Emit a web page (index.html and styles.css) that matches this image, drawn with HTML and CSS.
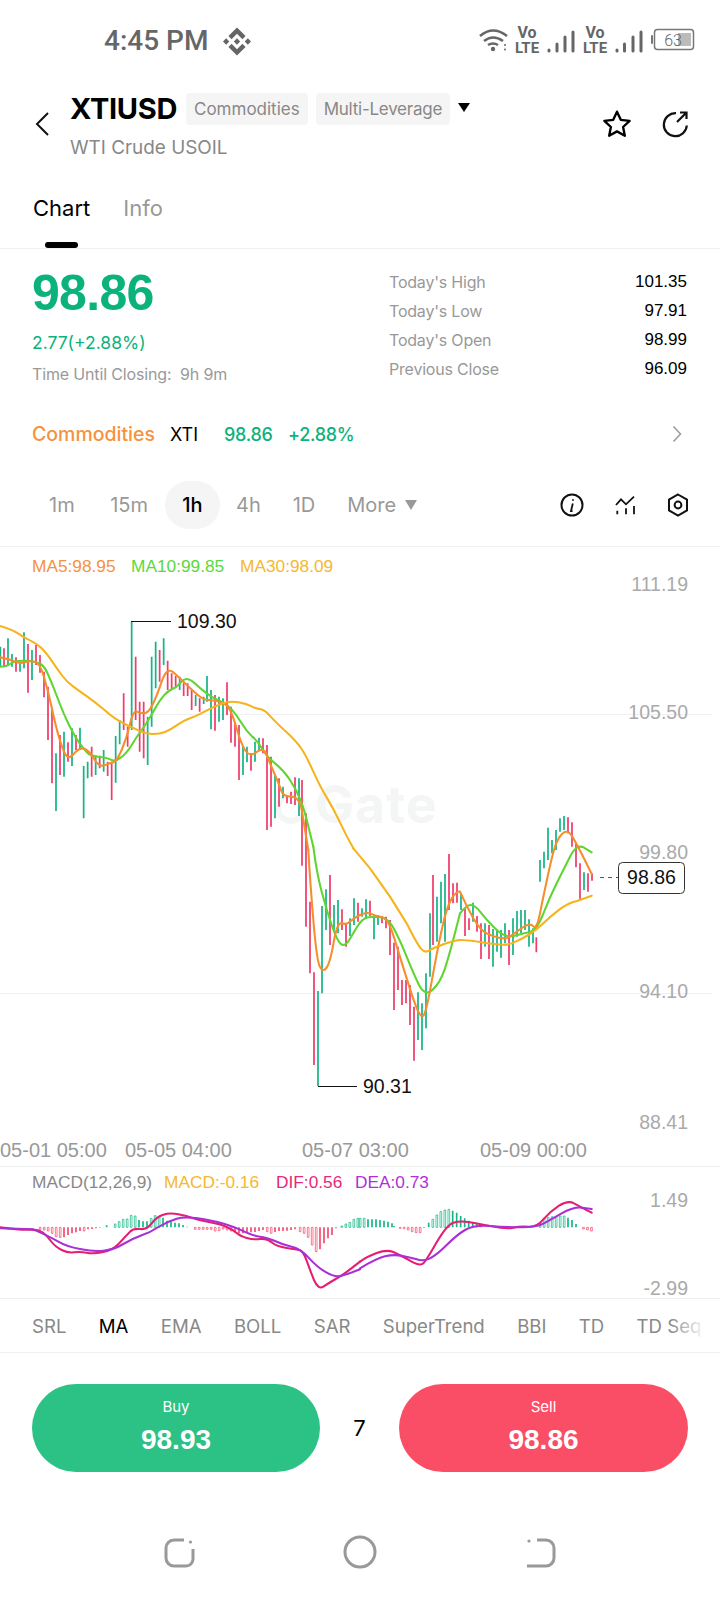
FILE: index.html
```html
<!DOCTYPE html>
<html lang="en">
<head>
<meta charset="utf-8">
<title>XTIUSD</title>
<link rel="stylesheet" href="styles.css">
</head>
<body>
<div class="page">
  <div class="status">
    <span class="clock">4:45 PM</span>
    <svg class="binance" viewBox="0 0 32 32"><path d="M9.8 13.4 16 7.2l6.2 6.2 3.6-3.6L16 0 6.2 9.8zM0 16l3.6-3.6L7.2 16l-3.6 3.6zM9.8 18.6 16 24.8l6.2-6.2 3.6 3.6L16 32l-9.8-9.8zM24.8 16l3.6-3.6L32 16l-3.6 3.6zM19.6 16 16 12.4 12.4 16l3.6 3.6z"/></svg>
    <svg class="sysicons" viewBox="470 22 230 36">
      <g class="wifi"><path d="M480 36q13-11 27 0M484 41q9-7 19 0M488 45q5-3 10 0"/></g>
      <circle class="sysfill" cx="493" cy="49" r="2.2"/><circle class="sysfill" cx="505" cy="45" r="1"/><circle class="sysfill" cx="505" cy="49.500" r="1"/>
      <text class="vo" x="527" y="38" text-anchor="middle">Vo</text><text class="lte" x="527" y="53" text-anchor="middle">LTE</text>
      <path class="bars" d="M549 50v1M557 44v7M565 37v14M573 32v19"/>
      <text class="vo" x="595" y="38" text-anchor="middle">Vo</text><text class="lte" x="595" y="53" text-anchor="middle">LTE</text>
      <path class="bars" d="M617 50v1M624.500 44v7M633 37v14M641 32v19"/>
      <rect class="batt-nub" x="651" y="35" width="2" height="9" rx="1"/>
      <rect class="batt" x="654.500" y="29.500" width="39" height="20" rx="3"/>
      <rect class="batt-fill" x="678" y="33" width="13" height="13"/>
      <text class="batt-text" x="673" y="45.500" text-anchor="middle">63</text>
    </svg>
  </div>

  <header class="head">
    <svg class="back" viewBox="0 0 16 26"><path d="M14 2 3 13l11 11"/></svg>
    <div class="title">
      <div class="title-row">
        <h1 class="symbol">XTIUSD</h1>
        <span class="chip chip-a">Commodities</span>
        <span class="chip">Multi-Leverage</span>
        <span class="caret"></span>
      </div>
      <div class="subtitle">WTI Crude USOIL</div>
    </div>
    <svg class="star" viewBox="0 0 28 28"><path d="m14 2.500 3.500 7.600 8.300 1-6.100 5.700 1.600 8.200L14 20.900 6.700 25l1.600-8.200-6.100-5.700 8.300-1z"/></svg>
    <svg class="share" viewBox="0 0 28 28"><path d="M15 3.200A11.500 11.500 0 1 0 25.800 15.500M19 2.500h6.500V9M25.500 2.500 16 12"/></svg>
  </header>

  <nav class="tabs">
    <span class="tab tab-on">Chart</span>
    <span class="tab">Info</span>
  </nav>

  <section class="quote">
    <div class="quote-left">
      <div class="price">98.86</div>
      <div class="change">2.77(+2.88%)</div>
      <div class="closing">Time Until Closing:&nbsp; 9h 9m</div>
    </div>
    <dl class="stats">
      <div class="stat"><dt>Today's High</dt><dd>101.35</dd></div>
      <div class="stat"><dt>Today's Low</dt><dd>97.91</dd></div>
      <div class="stat"><dt>Today's Open</dt><dd>98.99</dd></div>
      <div class="stat"><dt>Previous Close</dt><dd>96.09</dd></div>
    </dl>
  </section>

  <div class="market">
    <span class="m-cat">Commodities</span>
    <span class="m-sym">XTI</span>
    <span class="m-num m-price">98.86</span>
    <span class="m-num">+2.88%</span>
    <svg class="m-arrow" viewBox="0 0 10 18"><path d="m1.500 1.500 7 7.500-7 7.500"/></svg>
  </div>

  <div class="periods">
    <span class="period p1">1m</span>
    <span class="period p2">15m</span>
    <span class="period period-on">1h</span>
    <span class="period p4">4h</span>
    <span class="period p5">1D</span>
    <span class="period p6">More</span>
    <span class="more-caret"></span>
    <svg class="tool tool-i" viewBox="0 0 24 24"><circle cx="12" cy="12" r="10.500"/><path class="thin" d="M12.800 10.500 11 18h1.500M13 6.200v1.600"/></svg>
    <svg class="tool tool-c" viewBox="0 0 24 24"><path d="m2 12 5-5.700 5 5 8-7.600"/><path d="M3.300 17.700v3.600M12 15.300v6M20 13v8.300"/></svg>
    <svg class="tool tool-h" viewBox="0 0 24 24"><path d="M12 1.500 21 6.700v10.600l-9 5.200-9-5.200V6.700z"/><circle cx="12" cy="12" r="3.400"/></svg>
  </div>

  <svg class="chart" viewBox="0 547 720 619">
    <path class="grid" d="M0 714.500H712M0 993.500H712"/>
    <text class="mark-g" x="315" y="823">Gate</text>
    <circle class="mark-c" cx="291" cy="808" r="13"/>
    <text class="lg lg-5" x="32" y="572">MA5:98.95</text>
    <text class="lg lg-10" x="131" y="572">MA10:99.85</text>
    <text class="lg lg-30" x="240" y="572">MA30:98.09</text>

    <g transform="translate(0 550) scale(.33333)">
      <path class="up" d="M1 290V350M24 265V345M36 312V350M60 335V365M72 247V355M96 300V390M168 610V783M192 545V680M216 535V648M240 533V600M251 648V805M263 635V685M287 617V675M311 600V665M347 558V698M359 510V583M395 215V540M443 500V645M455 320V530M467 275V415M491 265V345M539 380V420M587 435V468M611 440V462M621 378V455M633 420V538M657 440V515M669 445V510M729 590V675M741 590V637M765 575V635M777 563V600M825 678V805M849 710V745M897 685V798"/>
      <path class="down" d="M12 295V350M48 322V365M84 282V428M108 285V345M120 315V368M132 365V442M144 410V570M156 475V700M180 555V675M204 577V635M228 555V600M275 590V680M299 617V655M323 635V678M335 635V750M371 430V540M383 530V590M407 320V510M419 455V605M431 455V625M479 300V395M503 332V420M515 370V420M527 378V415M551 400V438M563 400V438M575 420V480M599 445V485M645 435V542M681 397V495M693 470V578M705 520V590M717 525V690M753 610V662M789 565V610M801 585V840M813 620V830M837 685V770M861 735V760M873 725V762M885 682V765"/>
    </g>
    <g transform="translate(260 780) scale(.33333)">
      <path class="up" d="M174 633V918M186 378V640M198 328V450M222 375V450M234 360V460M270 415V468M282 355V435M306 385V410M318 358V415M342 405V478M354 405V435M474 637V780M486 670V810M498 580V745M510 400V590"/>
      <path class="down" d="M126 0V257M138 100V440M150 365V580M162 577V855M210 285V495M246 388V450M258 430V500M294 368V425M330 362V408M366 408V430M378 410V445M390 420V525M402 488V690M414 500V630M426 600V675M438 600V670M450 615V735M462 680V842"/>
    </g>
    <g transform="translate(360 780) scale(.33333)">
      <path class="up" d="M231 350V485M243 305V430M255 282V485M303 340V390M339 368V425M375 430V500M399 447V560M411 450V515M423 450V533M435 430V490M459 415V525M471 393V470M483 390V460M495 390V450M507 418V500M519 445V490M540 240V305M552 215V265M564 143V240M576 180V220M588 150V210M600 115V155M612 108V150M672 277V330"/>
      <path class="down" d="M219 285V495M267 222V390M279 310V370M291 308V368M315 385V468M327 415V450M351 408V455M363 430V537M387 435V537M447 450V555M529 472V517M624 112V160M636 127V200M648 190V262M660 250V360M684 280V335M696 280V302"/>
    </g>

    <g transform="translate(0 550) scale(.33333)">
      <path class="ma ma10" d="M0,350 Q20,350 30,342 40,335 55,333 70,332 90,333 110,335 122,342 135,350 147,380 160,410 175,450 190,490 207,525 225,560 237,577 250,595 260,606 270,618 295,620 320,622 332,629 345,637 362,623 380,610 395,585 410,560 425,540 440,520 450,502 460,485 470,467 480,450 492,436 505,422 517,417 530,412 545,395 560,378 580,396 600,415 620,430 640,445 660,453 680,462 695,478 710,495 725,520 740,545 757,560 775,575 787,597 800,620 825,640 850,660 870,690 890,720 902,752 915,785 927,837 L940,890"/>
      <path class="ma ma5" d="M0,322 Q30,328 45,335 60,342 75,337 90,332 105,335 120,338 132,381 145,425 155,472 165,520 175,555 185,590 195,611 205,632 222,611 240,590 255,597 270,605 283,628 297,652 313,646 330,640 340,637 350,635 365,600 380,565 390,522 400,480 410,485 420,490 432,490 445,490 457,465 470,440 485,395 500,350 520,367 540,385 555,400 570,415 590,432 610,450 625,450 640,450 660,455 680,460 690,480 700,500 712,542 725,585 737,603 750,622 770,606 790,590 800,615 810,640 825,675 840,710 845,725 850,740 875,740 900,740 907,790 915,840 925,900"/>
      <path class="ma ma30" d="M0,228 Q40,240 55,251 70,262 90,271 110,280 125,295 140,310 155,332 170,355 185,375 200,395 220,410 240,425 265,442 290,460 310,477 330,495 345,505 360,515 375,522 390,530 415,541 440,552 460,552 480,552 495,546 510,540 530,526 550,512 570,505 590,498 615,484 640,470 665,461 690,452 715,457 740,462 755,469 770,477 782,478 795,480 812,500 830,520 860,547 890,575 905,597 920,620 940,665 960,710 980,742 1000,775 1020,817 1040,860 1060,895"/>
    </g>
    <g transform="translate(260 780) scale(.33333)">
      <path class="ma ma10" d="M160,200 Q170,280 185,335 200,390 215,435 230,480 242,491 255,503 270,476 285,450 297,432 310,415 325,412 340,410 362,412 385,415 402,447 420,480 440,530 460,580 477,615 495,650 517,630 540,610 555,565 570,520 600,400"/>
      <path class="ma ma5" d="M145,210 Q150,300 160,420 170,540 179,559 188,578 199,564 210,550 221,487 232,425 245,430 258,435 269,425 280,415 300,405 320,395 332,401 345,408 365,411 385,415 402,472 420,530 440,595 460,660 472,689 485,718 492,704 500,690 515,605 530,520 545,450 560,380 575,356 590,332 600,335"/>
      <path class="ma ma30" d="M280,205 L330,265 L390,350 L440,430 Q470,490 482,505 495,520 507,512 520,505 550,493 580,482 600,480"/>
    </g>
    <g transform="translate(360 780) scale(.33333)">
      <path class="ma ma10" d="M300,400 Q320,375 332,375 345,375 362,397 380,420 400,440 420,460 435,466 450,472 470,466 490,460 510,456 530,452 550,401 570,350 590,310 610,270 630,230 650,190 672,203 L695,217"/>
      <path class="ma ma5" d="M300,335 Q320,380 340,415 360,450 380,460 400,470 420,474 440,478 455,466 470,455 490,441 510,428 520,439 530,450 540,400 550,350 565,280 580,210 590,187 600,165 612,157 625,150 637,170 650,190 695,282"/>
      <path class="ma ma30" d="M300,480 Q340,482 360,486 380,490 410,493 440,497 460,488 480,480 505,465 530,450 550,430 570,410 595,391 620,372 640,366 660,360 695,347"/>
    </g>

    <path class="leader" d="M131 621.500H171M318 1086.500H357"/>
    <text class="ext" x="177" y="628">109.30</text>
    <text class="ext" x="363" y="1093">90.31</text>

    <path class="dash" d="M600 877.500H618"/>
    <rect class="tag" x="618.500" y="862.500" width="66" height="31" rx="4"/>
    <text class="ext" x="651.500" y="884" text-anchor="middle">98.86</text>

    <text class="axis" x="688" y="591" text-anchor="end">111.19</text>
    <text class="axis" x="688" y="719" text-anchor="end">105.50</text>
    <text class="axis" x="688" y="859" text-anchor="end">99.80</text>
    <text class="axis" x="688" y="998" text-anchor="end">94.10</text>
    <text class="axis" x="688" y="1129" text-anchor="end">88.41</text>
    <text class="date" x="0" y="1157">05-01 05:00</text>
    <text class="date" x="125" y="1157">05-05 04:00</text>
    <text class="date" x="302" y="1157">05-07 03:00</text>
    <text class="date" x="480" y="1157">05-09 00:00</text>
  </svg>

  <svg class="macd" viewBox="0 1167 720 131">
    <text class="lg lg-m" x="32" y="1188">MACD(12,26,9)</text>
    <text class="lg lg-30" x="164" y="1188">MACD:-0.16</text>
    <text class="lg lg-d" x="276" y="1188">DIF:0.56</text>
    <text class="lg lg-e" x="355" y="1188">DEA:0.73</text>
    <g transform="translate(0 1150) scale(.33333)">
      <path class="h-g" d="M320 232V226M417 232V210M429 232V214M441 232V214M489 232V203M501 232V212M513 232V215M525 232V218M537 232V220M549 232V225M561 232V230"/>
      <path class="h-go" d="M343 232V222h5V232zM355 232V215h5V232zM367 232V208h5V232zM379 232V207h5V232zM391 232V196h5V232zM403 232V198h5V232zM451 232V205h5V232zM463 232V197h5V232zM475 232V200h5V232zM1023 232V228h5V232zM1035 232V222h5V232zM1047 232V217h5V232zM1059 232V208h5V232zM1071 232V205h5V232z"/>
      <path class="h-r" d="M192 232V262M204 232V255M216 232V250M228 232V247M240 232V243M264 232V238M276 232V237M288 232V235M300 232V233M705 232V245M717 232V250M729 232V250M741 232V248M753 232V247M765 232V246M777 232V243M789 232V240M825 232V246M837 232V243M849 232V243M861 232V242M873 232V240M885 232V238M960 232V298M972 232V280M984 232V265M996 232V255M1008 232V235"/>
      <path class="h-ro" d="M118 232V238h5V232zM130 232V240h5V232zM142 232V243h5V232zM154 232V250h5V232zM166 232V260h5V232zM178 232V262h5V232zM250 232V243h5V232zM583 232V238h5V232zM595 232V238h5V232zM607 232V238h5V232zM619 232V238h5V232zM631 232V238h5V232zM643 232V243h5V232zM655 232V242h5V232zM667 232V237h5V232zM679 232V240h5V232zM691 232V243h5V232zM799 232V245h5V232zM811 232V250h5V232zM898 232V245h5V232zM910 232V250h5V232zM922 232V262h5V232zM934 232V285h5V232zM946 232V305h5V232z"/>
      <path class="ma dif" d="M0,232 Q60,240 85,239 110,238 122,244 135,250 150,270 165,290 185,300 205,310 222,307 240,305 260,308 280,312 310,306 340,300 360,277 380,255 390,245 400,235 420,237 440,240 455,220 470,200 490,194 510,188 535,193 560,198 580,205 600,212 630,217 660,222 680,231 700,240 710,249 720,258 740,264 760,270 780,267 800,265 815,277 830,290 860,294 890,298 900,301 910,305 920,332 930,360 942,390 955,420 970,410 985,400 1007,387 1030,375 1080,335"/>
      <path class="ma dea" d="M0,235 L100,238 Q150,260 175,275 200,290 240,297 280,305 310,302 340,300 370,282 400,265 425,256 450,248 475,231 500,215 530,206 560,198 620,209 680,220 720,239 760,258 780,260 800,262 825,273 850,285 875,290 900,295 925,322 950,350 975,365 1000,380 1015,379 1030,378 1080,358"/>
    </g>
    <g transform="translate(360 1150) scale(.33333)">
      <path class="h-g" d="M24 232V208M36 232V208M48 232V208M60 232V210M72 232V212M84 232V215M96 232V220M102 232V228M206 232V218M278 232V182M290 232V188M302 232V198M314 232V205M326 232V212M338 232V218M350 232V222M362 232V226M624 232V203M636 232V210M648 232V222"/>
      <path class="h-go" d="M-2 232V205h5V232zM10 232V205h5V232zM216 232V208h5V232zM228 232V195h5V232zM240 232V185h5V232zM252 232V180h5V232zM264 232V178h5V232zM538 232V220h5V232zM550 232V205h5V232zM562 232V202h5V232zM574 232V200h5V232zM586 232V200h5V232zM598 232V198h5V232zM610 232V198h5V232z"/>
      <path class="h-r" d="M192 232V234"/>
      <path class="h-ro" d="M118 232V235h5V232zM130 232V236h5V232zM142 232V240h5V232zM154 232V245h5V232zM166 232V248h5V232zM178 232V248h5V232zM668 232V237h5V232zM680 232V240h5V232zM692 232V243h5V232z"/>
      <path class="ma dif" d="M0,335 Q20,320 50,309 80,298 100,306 120,315 150,332 180,350 190,340 200,330 230,277 260,225 280,218 300,212 325,216 350,220 395,229 440,238 460,233 480,228 505,230 530,232 550,208 570,185 597,167 625,150 642,160 660,170 695,188"/>
      <path class="ma dea" d="M0,355 Q50,325 75,319 100,313 125,317 150,322 170,328 190,335 210,325 230,315 260,285 290,255 315,240 340,225 390,228 440,232 485,232 530,232 550,221 570,210 605,190 640,170 667,173 L695,177"/>
    </g>
    <text class="axis" x="688" y="1207" text-anchor="end">1.49</text>
    <text class="axis" x="688" y="1295" text-anchor="end">-2.99</text>
  </svg>

  <div class="indicators">
    <span class="ind">SRL</span>
    <span class="ind ind-on">MA</span>
    <span class="ind">EMA</span>
    <span class="ind">BOLL</span>
    <span class="ind">SAR</span>
    <span class="ind">SuperTrend</span>
    <span class="ind">BBI</span>
    <span class="ind">TD</span>
    <span class="ind">TD Seq</span>
  </div>

  <div class="actions">
    <button class="btn btn-buy"><span class="btn-l">Buy</span><span class="btn-n">98.93</span></button>
    <span class="spread">7</span>
    <button class="btn btn-sell"><span class="btn-l">Sell</span><span class="btn-n">98.86</span></button>
  </div>

  <div class="navbar">
    <svg class="nav nav-l" viewBox="0 0 32 30"><path d="M20 2H10a8 8 0 0 0-8 8v10a8 8 0 0 0 8 8h12a7 7 0 0 0 7-7V11"/><circle cx="26.500" cy="4" r="1.600"/></svg>
    <svg class="nav nav-c" viewBox="0 0 34 34"><circle class="ring" cx="17" cy="17" r="15"/></svg>
    <svg class="nav nav-r" viewBox="0 0 30 30"><path d="M11 2h9a8 8 0 0 1 8 8v10a8 8 0 0 1-8 8H1"/><circle cx="3" cy="3" r="1.600"/></svg>
  </div>
</div>
</body>
</html>
```
FILE: styles.css
```css
* { box-sizing: border-box; margin: 0; padding: 0; }
html, body { background: #fff; }
body { font-family: "Inter", "Liberation Sans", sans-serif; color: #000; }
.page { width: 720px; height: 1600px; overflow: hidden; background: #fff; }

.status { height: 82px; display: flex; align-items: flex-start; padding: 24px 26px 0 104px; }
.clock { font-family: "Roboto", sans-serif; font-size: 28px; font-weight: 500; line-height: 34px; color: #666; width: 119px; }
.binance { width: 28px; height: 29px; margin-top: 3px; fill: #666; }
.sysicons { width: 230px; height: 36px; margin-left: auto; margin-right: -6px; margin-top: -2px; }
.wifi path { fill: none; stroke: #666; stroke-width: 2.600; }
.sysfill { fill: #666; }
.vo, .lte { font-family: "Roboto", sans-serif; font-weight: 700; fill: #666; }
.vo { font-size: 16px; }
.lte { font-size: 15px; }
.bars { fill: none; stroke: #666; stroke-width: 3; stroke-linecap: round; }
.batt-nub { fill: #777; }
.batt { fill: none; stroke: #777; stroke-width: 1.500; }
.batt-fill { fill: #bbb; }
.batt-text { font-family: "Roboto", sans-serif; font-size: 16px; fill: #666; font-weight: 300; }

.head { height: 78px; display: flex; align-items: flex-start; padding-left: 34px; position: relative; }
.back { width: 16px; height: 26px; margin-top: 29px; flex: none; fill: none; stroke: #111; stroke-width: 2; }
.title { margin-left: 20px; width: 502px; }
.title-row { display: flex; align-items: center; height: 44px; margin-top: 5px; }
.symbol { font-size: 29px; font-weight: 700; letter-spacing: -0.3px; line-height: 32px; width: 116px; }
.chip { background: #f5f5f5; border-radius: 4px; font-size: 17px; color: #888; height: 32px; line-height: 32px; padding: 0 8px; margin-right: 8px; white-space: nowrap; }
.chip:not(.chip-a) { letter-spacing: -0.25px; }
.caret { width: 0; height: 0; border-left: 6px solid transparent; border-right: 6px solid transparent; border-top: 9px solid #000; margin-top: -4px; }
.subtitle { font-size: 18.900px; color: #888; line-height: 22px; margin-top: 6px; }
.star { width: 30px; height: 30px; margin-left: 30px; margin-top: 27px; flex: none; fill: none; stroke: #000; stroke-width: 2.200; stroke-linejoin: round; }
.share { width: 28px; height: 28px; margin-left: 29px; margin-top: 28px; flex: none; fill: none; stroke: #111; stroke-width: 2.200; }

.tabs { height: 89px; display: flex; gap: 33px; padding: 32px 0 0 33px; border-bottom: 1px solid #f0f0f0; }
.tab { font-size: 22px; line-height: 32px; color: #999; position: relative; height: 32px; }
.tab-on { color: #000; font-weight: 400; }
.tab-on::after { content: ""; position: absolute; left: 12px; top: 50px; width: 33px; height: 6px; background: #000; border-radius: 3px; }

.quote { height: 167px; display: flex; justify-content: space-between; padding: 18px 33px 0 32px; }
.price { font-family: "Liberation Sans", sans-serif; font-size: 50px; font-weight: 700; letter-spacing: -0.700px; line-height: 52px; color: #0bb27c; }
.change { font-size: 17.500px; line-height: 22px; color: #0bb27c; margin-top: 13px; }
.closing { font-size: 16px; letter-spacing: -0.150px; line-height: 22px; color: #999; margin-top: 9px; }
.stats { width: 298px; }
.stat { display: flex; justify-content: space-between; height: 29px; align-items: center; font-size: 16px; letter-spacing: -0.200px; }
.stat dt { color: #999; }
.stat dd { color: #000; font-family: "Liberation Sans", sans-serif; font-size: 17px; letter-spacing: 0; }

.market { height: 36px; display: flex; align-items: center; padding: 0 38px 0 32px; font-size: 18px; font-weight: 500; }
.m-cat { color: #f7923c; width: 138px; font-size: 19.500px; white-space: nowrap; }
.m-sym { width: 54px; font-weight: 400; }
.m-num { color: #0bb27c; letter-spacing: -0.300px; }
.m-price { width: 64px; }
.m-arrow { width: 10px; height: 18px; margin-left: auto; fill: none; stroke: #999; stroke-width: 1.500; }

.periods { height: 95px; display: flex; align-items: center; border-bottom: 1px solid #f0f0f0; font-size: 20px; color: #999; padding: 11px 0 0 49px; }
.p2 { margin-left: 35.500px; }
.period-on { width: 55px; height: 48px; margin-left: 17px; border-radius: 24px; background: #f5f5f5; color: #000; font-weight: 500; display: flex; align-items: center; justify-content: center; }
.p4 { margin-left: 16px; }
.p5 { margin-left: 32px; }
.p6 { margin-left: 32px; }
.more-caret { width: 0; height: 0; border-left: 6.500px solid transparent; border-right: 6.500px solid transparent; border-top: 10px solid #999; margin-left: 9px; }
.tool { width: 24px; height: 24px; fill: none; stroke: #111; stroke-width: 2; flex: none; }
.tool-i { margin-left: 143px; }
.tool-c { margin-left: 30px; stroke-width: 1.800; }
.tool-h { margin-left: 28px; }
.thin { stroke-width: 1.800; }

.chart { display: block; width: 720px; height: 620px; border-bottom: 1px solid #eee; }
.macd { display: block; width: 720px; height: 132px; border-bottom: 1px solid #eee; }
.chart text, .macd text { font-family: "Liberation Sans", sans-serif; }
.grid { fill: none; stroke: #f0f0f0; stroke-width: 1; }
.chart .mark-g { font-family: "Inter", sans-serif; font-size: 52px; letter-spacing: 1px; font-weight: 700; fill: #f4f5f5; }
.mark-c { fill: none; stroke: #f4f5f5; stroke-width: 6; }
.lg { font-size: 17.300px; }
.lg-5 { fill: #f5923f; }
.lg-10 { fill: #5bd93c; }
.lg-30 { fill: #f5b82e; }
.lg-m { fill: #888; }
.lg-d { fill: #e8287a; }
.lg-e { fill: #b02fd8; }
.up, .down { fill: none; stroke-width: 5.200; }
.up { stroke: #18b488; }
.down { stroke: #ee3e6c; }
.ma { fill: none; stroke-width: 6.200; stroke-linejoin: round; stroke-linecap: round; }
.ma5 { stroke: #f58f2c; }
.ma10 { stroke: #5ed62f; }
.ma30 { stroke: #f6b31c; }
.dif { stroke: #e61e72; }
.dea { stroke: #a92fd6; }
.leader { fill: none; stroke: #111; stroke-width: 1; }
.ext { font-size: 19.500px; fill: #111; }
.dash { fill: none; stroke: #555; stroke-width: 1; stroke-dasharray: 4 4; }
.tag { fill: #fff; stroke: #333; stroke-width: 1; }
.axis { font-size: 19.500px; fill: #aaa; }
.date { font-size: 20px; fill: #999; }
.h-g, .h-r { fill: none; stroke-width: 5; }
.h-go, .h-ro { fill: none; stroke-width: 2.200; }
.h-g, .h-go { stroke: #12b583; }
.h-r, .h-ro { stroke: #f5486f; }

.indicators { height: 54px; display: flex; align-items: center; gap: 32.360px; font-size: 18.600px; color: #888; border-bottom: 1px solid #f0f0f0; padding-left: 32px; overflow: hidden; white-space: nowrap; position: relative; }
.ind-on { color: #000; }
.indicators::after { content: ""; position: absolute; right: 14px; top: 0; bottom: 0; width: 36px; background: linear-gradient(90deg, rgba(255,255,255,0), #fff); }

.actions { height: 152px; display: flex; align-items: flex-start; padding: 31px 32px 0; }
.btn { width: 288px; height: 88px; border: 0; border-radius: 44px; color: #fff; display: flex; flex-direction: column; align-items: center; font-family: "Inter", sans-serif; padding-top: 13px; }
.btn-buy { background: #2cc185; }
.btn-sell { background: #f94e66; width: 289px; }
.btn-l { font-size: 15px; line-height: 20px; }
.btn-n { font-family: "Liberation Sans", sans-serif; font-size: 28px; font-weight: 700; line-height: 32px; margin-top: 7px; }
.spread { width: 79px; text-align: center; font-size: 22px; line-height: 88px; }

.navbar { height: 95px; display: flex; align-items: flex-start; padding: 31px 0 0 164px; }
.nav { fill: none; stroke: #999; stroke-width: 3; flex: none; }
.nav circle { fill: #999; stroke: none; }
.nav .ring { fill: none; stroke: #999; stroke-width: 3; }
.nav-l { width: 32px; height: 30px; margin-top: 2px; }
.nav-c { width: 34px; height: 34px; margin-left: 147px; margin-top: -1px; }
.nav-r { width: 30px; height: 30px; margin-left: 149px; margin-top: 2px; }
```
